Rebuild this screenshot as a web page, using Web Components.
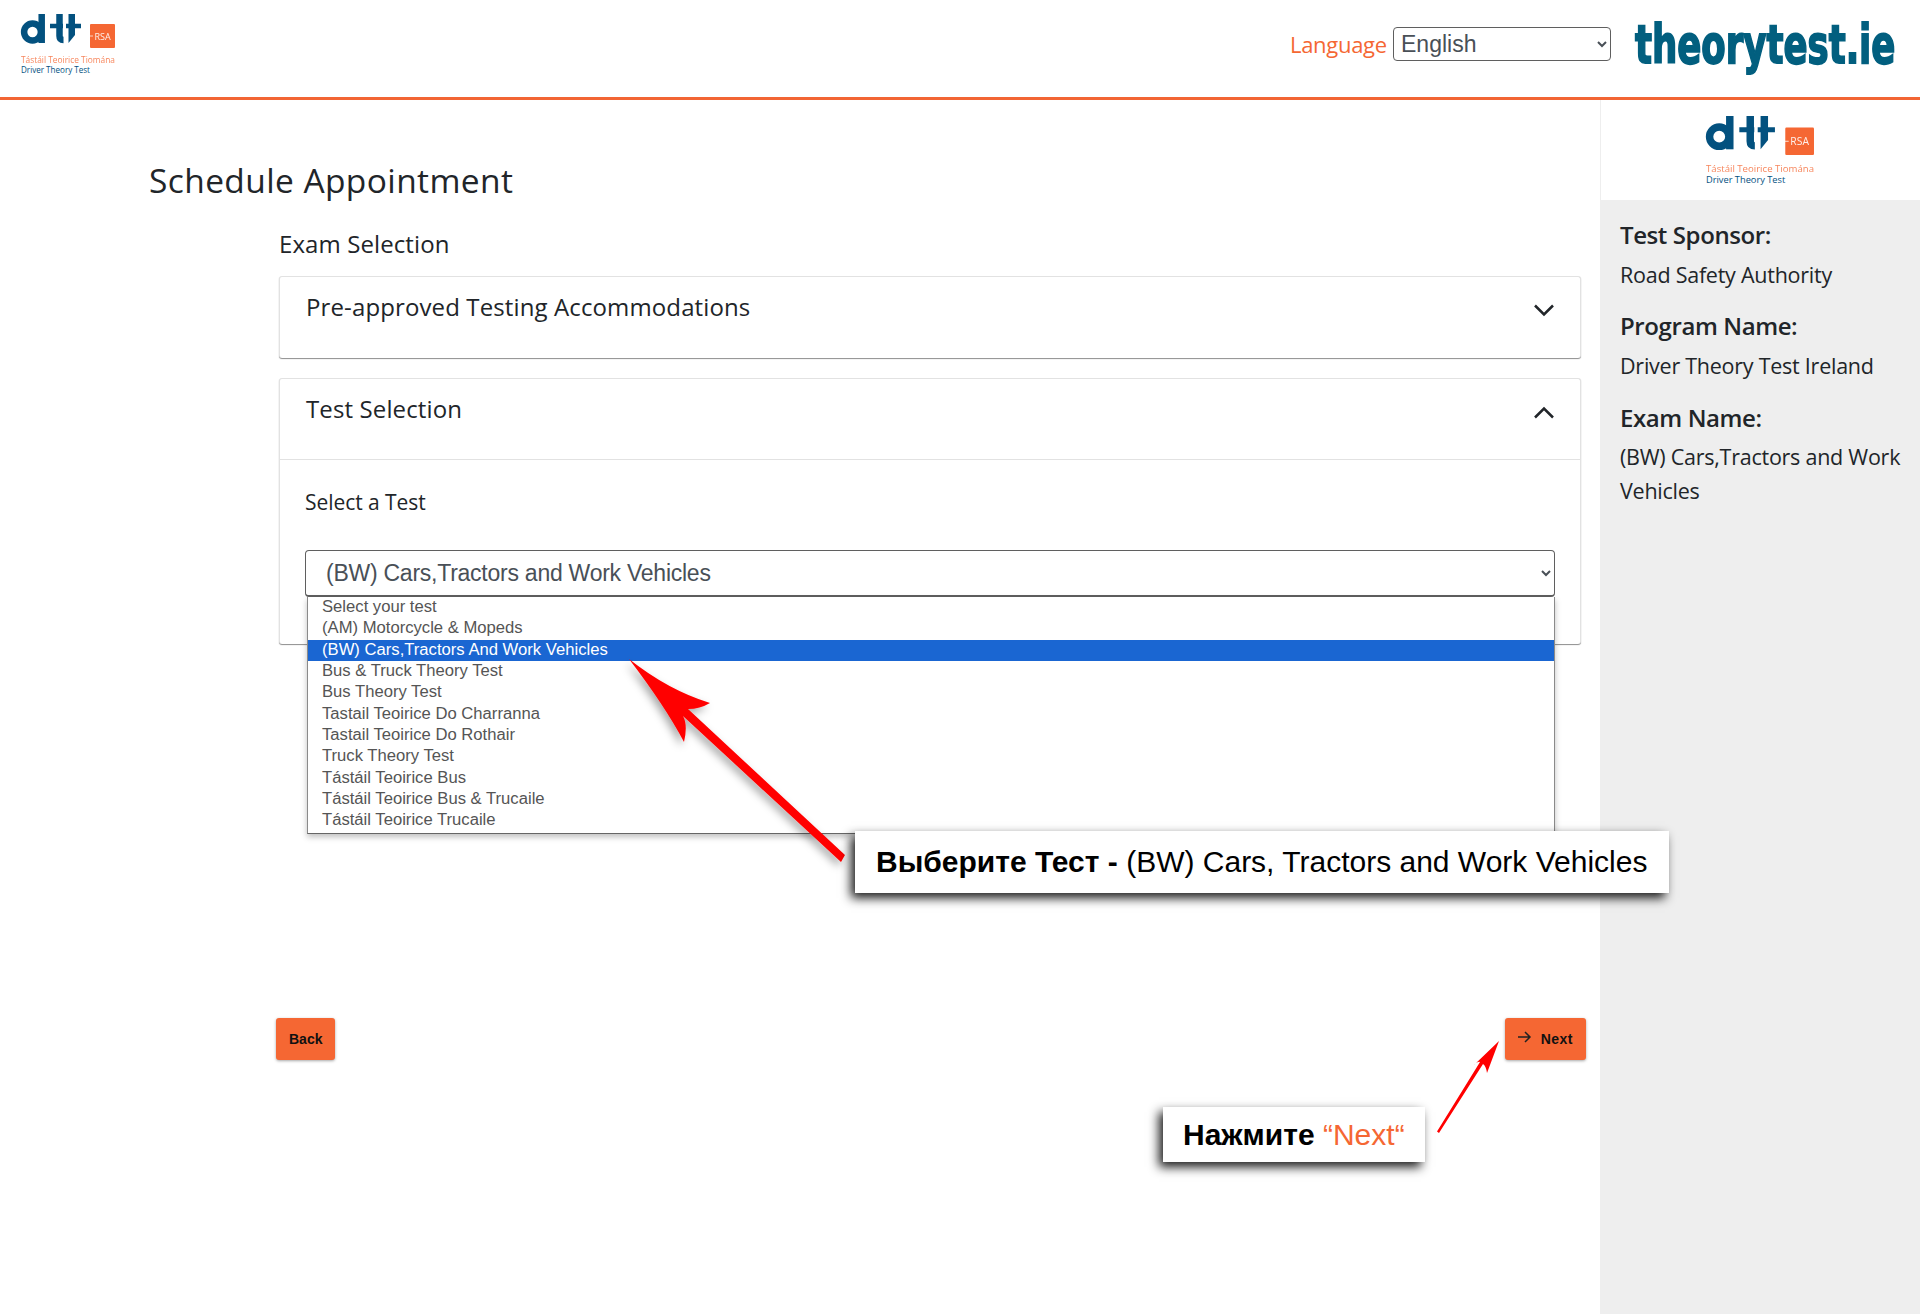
<!DOCTYPE html>
<html><head><meta charset="utf-8">
<style>
html,body{margin:0;padding:0;background:#fff;overflow:hidden}
body{width:1920px;height:1314px;font-family:"Open Sans",sans-serif;color:#212529}
</style></head><body>
<x-app></x-app>
<script>
function def(name, html, init){
  customElements.define(name, class extends HTMLElement{
    constructor(){super();const s=this.attachShadow({mode:'open'});s.innerHTML=html;}
    connectedCallback(){ if(init) init(this); }
  });
}
def('x-logo',`<style>:host{display:block;width:var(--w,94px)}svg{display:block;width:100%;height:auto;overflow:visible}
text{font-family:"Open Sans",sans-serif}</style>
<svg viewBox="0 0 94 62">
  <g fill="none" stroke="#03517f">
    <circle cx="11.500" cy="18" r="8.400" stroke-width="6.500"/>
    <path d="M20.700 0V29" stroke-width="6.500"/>
    <path d="M38.500 0V22q0 4 4 4" stroke-width="6.500"/>
    <path d="M29 12H42M45 12H60" stroke-width="4.500"/>
  </g>
  <path d="M47.500 0H54V21L47.500 29z" fill="#03517f"/>
  <rect x="69" y="10" width="25" height="24" rx="1" fill="#f56733"/>
  <path d="M66 22H72" stroke="#fff" stroke-width=".7"/>
  <text x="81.500" y="25.500" font-size="9" fill="#fff" opacity=".9" text-anchor="middle">RSA</text>
  <text x="0" y="48.500" font-size="8.200" fill="#f56733" opacity=".8" textLength="94" lengthAdjust="spacingAndGlyphs">Tástáil Teoirice Tiomána</text>
  <text x="0" y="58.500" font-size="8.200" fill="#03517f" textLength="69" lengthAdjust="spacingAndGlyphs">Driver Theory Test</text>
</svg>`);

def('x-header',`<style>
:host{display:flex;box-sizing:border-box;height:100px;border-bottom:3px solid #f26534;align-items:flex-start;justify-content:space-between;padding:14px 25px 0 21px}
.r{display:flex;align-items:center;height:70px;margin-top:-5px}
.l{font:22px/1 "Open Sans",sans-serif;color:#f56733;letter-spacing:-.3px;margin-right:8px;width:95px;white-space:nowrap}
select{box-sizing:border-box;width:218px;height:34px;font:23px "Liberation Sans",sans-serif;color:#495057;background:#fff;border:1px solid #5f5f5f;border-radius:4px;padding:0 3px;margin-right:24px}
.b{width:260px;height:46px;white-space:nowrap;margin-top:1px}
.b span{display:inline-block;transform-origin:0 0;transform:scaleX(.731);font:700 54px/46px "DejaVu Sans",sans-serif;font-stretch:condensed;color:#025f7f;-webkit-text-stroke:1.800px #025f7f}
</style>
<x-logo></x-logo>
<div class="r"><span class="l">Language</span><select><option>English</option></select><div class="b"><span>theorytest.ie</span></div></div>`);

def('x-card',`<style>
:host{display:block;box-sizing:border-box;background:#fff;border:1px solid #e2e2e2;border-bottom:0;border-radius:3px;box-shadow:0 1px 1px 0 rgba(0,0,0,.45);width:1302px;margin-bottom:20px}
.h{box-sizing:border-box;display:flex;justify-content:space-between;height:81px;padding:13px 25px 0 26px;font:400 24px/34px "Open Sans",sans-serif;letter-spacing:.12px;color:#212529}
svg{width:22px;height:14px;margin-top:13px}
:host([open]) .h{border-bottom:1px solid #e2e2e2;height:81px}
:host([open]) svg{margin-top:14px}
.u{display:none}:host([open]) .u{display:block}:host([open]) .d{display:none}
</style>
<div class="h"><span><slot name="title"></slot></span>
<svg class="d" viewBox="0 0 22 14"><path d="M2 2.500l9 9 9-9" fill="none" stroke="#212529" stroke-width="2.500"/></svg>
<svg class="u" viewBox="0 0 22 14"><path d="M2 11.500l9-9 9 9" fill="none" stroke="#212529" stroke-width="2.500"/></svg></div>
<slot></slot>`);

const opts=['Select your test','(AM) Motorcycle &amp; Mopeds','(BW) Cars,Tractors And Work Vehicles','Bus &amp; Truck Theory Test','Bus Theory Test','Tastail Teoirice Do Charranna','Tastail Teoirice Do Rothair','Truck Theory Test','Tástáil Teoirice Bus','Tástáil Teoirice Bus &amp; Trucaile','Tástáil Teoirice Trucaile'];
def('x-test-select',`<style>
:host{display:block;position:relative;height:47px}
select{box-sizing:border-box;display:block;width:100%;height:47px;font:23px "Liberation Sans",sans-serif;letter-spacing:-.25px;color:#495057;background:#fff;border:1px solid #5f5f5f;border-bottom-width:2px;border-radius:4px;padding:0 16px}
.m{position:absolute;z-index:3;top:47px;left:2px;right:0;box-sizing:border-box;background:#fff;border:1px solid #8a8a8a;border-top:0;border-bottom:1px solid #666;padding-bottom:1px;box-shadow:0 3px 6px rgba(0,0,0,.25);font:16.650px/20px "Liberation Sans",sans-serif;color:#555}
.o{padding-left:14px;height:21.330px;white-space:nowrap}
.s{background:#1a66d2;color:#fff}
</style>
<select><option>(BW) Cars,Tractors and Work Vehicles</option></select>
<div class="m">${opts.map((o,i)=>`<div class="o${i==2?' s':''}">${o}</div>`).join('')}</div>`);

def('x-btn',`<style>
:host{display:inline-flex;box-sizing:border-box;height:42px;align-items:center;background:#f56733;border-radius:3px;box-shadow:0 1px 3px rgba(0,0,0,.35);padding:0 13px;font:700 14px "Liberation Sans",sans-serif;color:#111}
:host([icon]){letter-spacing:.5px}
svg{width:15px;height:14px;margin-right:9px;margin-top:-4px;margin-left:-1px;display:none}
:host([icon]) svg{display:block}
</style><svg viewBox="0 0 15 14"><path d="M1 7H13M8 2l5 5-5 5" fill="none" stroke="#222" stroke-width="1.500"/></svg><slot></slot>`);

def('x-main',`<style>
:host{display:block;box-sizing:border-box;height:1214px;padding:60px 0 0 149px}
h1{margin:0;font:500 33.500px/40px "Open Sans",sans-serif;letter-spacing:.4px;color:#212529}
.w{margin-left:130px}
h2{margin:29px 0 17px;font:400 24px/30px "Open Sans",sans-serif;letter-spacing:.1px;color:#212529}
.b{padding:27px 25px 47px 25px}
.lb{font:400 21px/30px "Open Sans",sans-serif;letter-spacing:-.05px;margin-bottom:33px}
.a{display:flex;justify-content:space-between;width:1310px;margin:374px 0 0 -3px}
</style>
<h1>Schedule Appointment</h1>
<div class="w">
<h2>Exam Selection</h2>
<x-card><span slot="title">Pre-approved Testing Accommodations</span></x-card>
<x-card open><span slot="title">Test Selection</span>
<div class="b"><div class="lb">Select a Test</div><x-test-select></x-test-select></div></x-card>
<div class="a"><x-btn>Back</x-btn><x-btn icon>Next</x-btn></div>
</div>`);

def('x-side',`<style>
:host{display:block;height:1214px;background:#eee;font-family:"Open Sans",sans-serif;color:#212529}
.t{box-sizing:border-box;height:100px;background:#fff;border-left:1px solid #eee;padding:16px 0 0 105px;--w:108px}
.c{padding:18px 12px 0 20px}
.k{font:600 24px/34px "Open Sans",sans-serif;letter-spacing:-.4px;margin-top:17px;color:#212529}
.k:first-child{margin-top:0}
.v{font:400 21.500px/34px "Open Sans",sans-serif;letter-spacing:-.25px;margin-top:6px}
.e{margin-top:18px}.e + .v{margin-top:5px}
</style>
<div class="t"><x-logo></x-logo></div>
<div class="c">
<div class="k">Test Sponsor:</div><div class="v">Road Safety Authority</div>
<div class="k">Program Name:</div><div class="v">Driver Theory Test Ireland</div>
<div class="k e">Exam Name:</div><div class="v">(BW) Cars,Tractors and Work Vehicles</div>
</div>`);

def('x-callout',`<style>
:host{position:absolute;display:flex;align-items:center;box-sizing:border-box;background:#fff;box-shadow:-4px 5px 10px rgba(0,0,0,.9);font:400 30px "Liberation Sans",sans-serif;color:#000;white-space:nowrap;z-index:6}
::slotted(b){font-weight:700}
</style><slot></slot>`);

def('x-annotations',`<style>
:host{position:absolute;left:0;top:0;width:1920px;height:1314px;pointer-events:none;z-index:5}
svg{position:absolute;left:0;top:0}
</style>
<svg width="1920" height="1314" viewBox="0 0 1920 1314">
<defs><filter id="f" x="-20%" y="-20%" width="140%" height="140%"><feDropShadow dx="-3" dy="4" stdDeviation="4" flood-color="#000" flood-opacity=".35"/></filter></defs>
<path filter="url(#f)" fill="#f00" d="M629 659Q668 690 710 703Q700 709 688 709L845 855L841 862L683 716Q688 725 684 742Q665 706 629 659Z"/>
<path fill="#f00" d="M1499 1041L1487 1073Q1486 1066 1483 1064L1439 1133L1437 1131.500L1480 1062Q1478 1061 1474 1065Z"/>
</svg>`);

def('x-app',`<style>
:host{display:grid;grid-template-columns:1600px 320px;grid-template-rows:100px 1214px;width:1920px;height:1314px;position:relative}
x-header{grid-column:1/3}
.c1{left:855px;top:831px;width:814px;height:62px;padding-left:21px}
.c2{left:1163px;top:1107px;width:262px;height:55px;padding-left:20px}
.n{color:#f56733}
</style>
<x-header></x-header><x-main></x-main><x-side></x-side>
<x-annotations></x-annotations>
<x-callout class="c1"><b>Выберите Тест -&nbsp;</b>(BW) Cars, Tractors and Work Vehicles</x-callout>
<x-callout class="c2"><b>Нажмите&nbsp;</b><span class="n">“Next“</span></x-callout>`);
</script>
</body></html>
